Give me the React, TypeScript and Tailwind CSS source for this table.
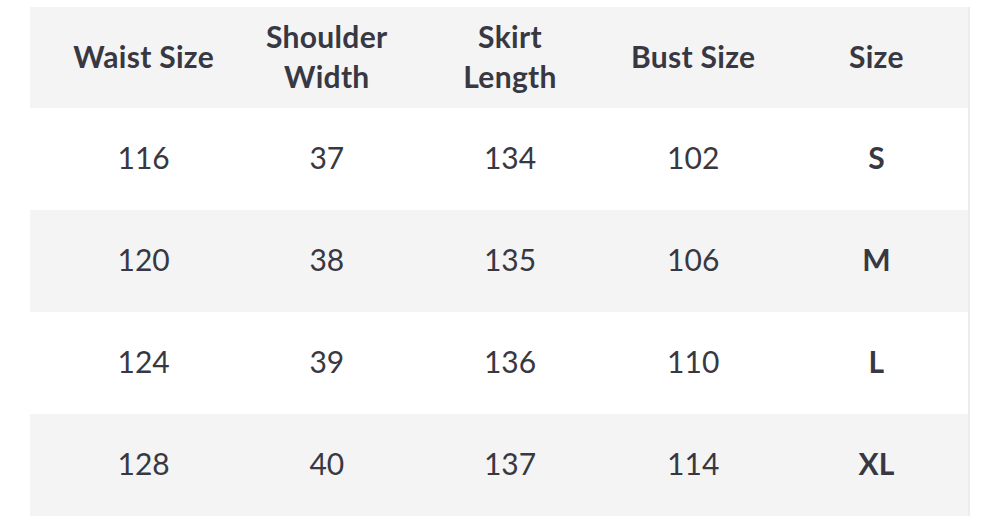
const headers = ["Waist Size", "Shoulder Width", "Skirt Length", "Bust Size", "Size"];

const rows = [
  ["116", "37", "134", "102", "S"],
  ["120", "38", "135", "106", "M"],
  ["124", "39", "136", "110", "L"],
  ["128", "40", "137", "114", "XL"],
];

export default function App() {
  return (
    <div className="h-[519px] w-[1000px] bg-white pt-[7px] pl-[30px] font-['Lato',sans-serif] text-[#383842]">
      <div className="w-[940px] border-r-2 border-[#ececee]">
        <div className="grid h-[101px] grid-cols-5 items-center bg-[#f4f4f5] pb-[3px] pl-[22px]">
          {headers.map((h) => (
            <div
              key={h}
              className="mx-auto w-[150px] text-center text-[30px] font-bold leading-[40px] tracking-[0.3px]"
            >
              {h}
            </div>
          ))}
        </div>
        {rows.map((r, i) => (
          <div
            key={r[4]}
            className={`grid h-[102px] grid-cols-5 items-center pb-[3px] pl-[22px] text-[30px] ${
              i % 2 === 1 ? "bg-[#f4f4f5]" : "bg-white"
            }`}
          >
            {r.map((c, j) => (
              <div key={j} className={`text-center ${j === 4 ? "font-bold" : ""}`}>
                {c}
              </div>
            ))}
          </div>
        ))}
      </div>
    </div>
  );
}
